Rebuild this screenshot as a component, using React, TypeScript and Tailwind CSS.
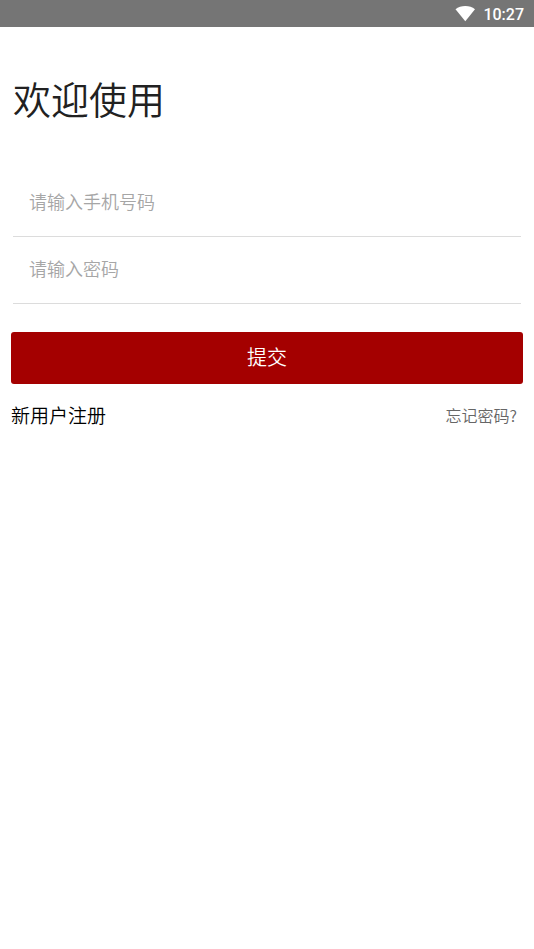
import React from 'react';

function StatusBar() {
  return (
    <header className="flex h-[27px] items-center justify-end gap-2 bg-[#757575] pr-[10px] text-white">
      <svg className="h-4 w-5" viewBox="0 0 20 16" fill="currentColor" aria-hidden="true">
        <path d="M10.300 15.200 0.500 3.300C3.300 1.100 6.500 0 10.300 0s7 1.100 9.700 3.300z" />
      </svg>
      <span className="pt-[2px] font-['Roboto',sans-serif] text-base leading-6 font-medium">10:27</span>
    </header>
  );
}

type FieldProps = { id: string; label: string; type: string };

function Field({ id, label, type }: FieldProps) {
  return (
    <div className="flex h-[67px] border-b border-[#dcdcdc]">
      <input
        id={id}
        type={type}
        aria-label={label}
        placeholder={label}
        className="w-full bg-transparent px-4 pb-1 text-lg text-[#212121] outline-none placeholder:text-[#a6a6a6]"
      />
    </div>
  );
}

export default function App() {
  return (
    <div className="min-h-screen bg-white font-['Noto_Sans_CJK_SC',sans-serif] font-[350]">
      <StatusBar />
      <main className="px-[11px]">
        <h1 className="mt-[46px] ml-[2px] text-[38px] leading-[50px] font-[350] text-[#212121]">欢迎使用</h1>
        <form className="mt-[47px]" onSubmit={(e) => e.preventDefault()}>
          <div className="mx-[2px]">
            <Field id="phone" label="请输入手机号码" type="tel" />
            <Field id="password" label="请输入密码" type="password" />
          </div>
          <button type="submit" className="mt-7 h-[52px] w-full rounded-[3px] bg-[#a40000] pb-[2px] text-xl text-white">
            提交
          </button>
        </form>
        <nav className="mt-[15px] flex items-center justify-between">
          <a href="#register" className="text-[19px] leading-8 text-black">新用户注册</a>
          <a href="#forgot" className="pr-[6px] text-base text-[#666666]">忘记密码?</a>
        </nav>
      </main>
    </div>
  );
}
